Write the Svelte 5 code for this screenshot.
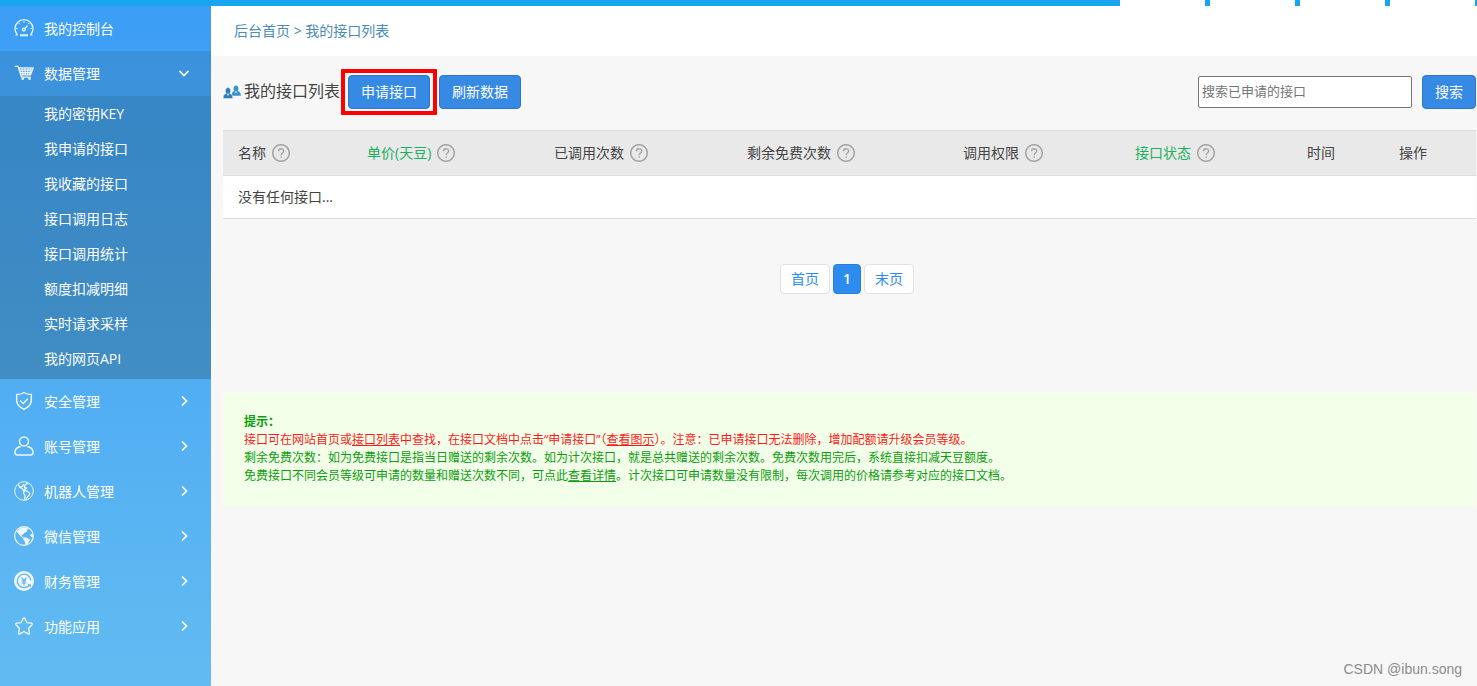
<script>
  let keyword = $state("");
  let dataOpen = $state(true);

  const tabs = ["one", "two", "three", "four"];

  const subMenu = [
    "我的密钥KEY",
    "我申请的接口",
    "我收藏的接口",
    "接口调用日志",
    "接口调用统计",
    "额度扣减明细",
    "实时请求采样",
    "我的网页API",
  ];

  const menu = [
    { icon: "shield", name: "安全管理" },
    { icon: "user", name: "账号管理" },
    { icon: "robot", name: "机器人管理" },
    { icon: "globe", name: "微信管理" },
    { icon: "money", name: "财务管理" },
    { icon: "star", name: "功能应用" },
  ];

  // width is in parts, turned into a percentage of the table
  const columns = [
    { name: "名称", width: 129, help: true },
    { name: "单价(天豆)", width: 187, help: true, sort: true },
    { name: "已调用次数", width: 193, help: true },
    { name: "剩余免费次数", width: 216, help: true },
    { name: "调用权限", width: 172, help: true },
    { name: "接口状态", width: 172, help: true, sort: true },
    { name: "时间", width: 92 },
    { name: "操作", width: 92 },
  ];
  const total = columns.reduce((sum, c) => sum + c.width, 0);
</script>

<svelte:head>
  <title>我的接口列表</title>
</svelte:head>

{#snippet icon(name)}
  <svg class="icon" viewBox="0 0 20 20" aria-hidden="true">
    {#if name === "dash"}
      <path d="M3.2 16.600A9 9 0 1 1 16.800 16.600" />
      <path d="M1.500 16.800h2.200M18.500 16.800h-2.200M10.600 10.800l3-3.200" />
      <path d="M10 3v1.800M4.800 5l1.200 1.300M15.200 5l-1 1.100M2 10.500h1.600M18 10.500h-1.600" stroke-width="1" />
      <circle cx="9.800" cy="11.600" r="1.400" />
      <path d="M6 17.300h8" stroke-width="2" />
    {:else if name === "cart"}
      <path d="M.8 3.400h3.400l3.300 10.800h9.300" />
      <path d="M4.600 4.800h14.600l-2.600 7H6.900z" />
      <path d="M8 5l1 7M11 5l.4 7M14 5l-.3 7M16.800 5l-1.200 7M5 7.200h13.400M5.800 9.600h11.800" />
      <circle class="solid" cx="8.800" cy="15.800" r="1.300" />
      <circle class="solid" cx="15.500" cy="15.800" r="1.300" />
    {:else if name === "shield"}
      <path d="M10 1.500c2 1.400 4.500 2 7.300 2v6c0 4-2.800 6.800-7.300 8.700-4.500-1.900-7.300-4.700-7.300-8.700v-6c2.800 0 5.300-.6 7.300-2z" stroke-width="1.500" />
      <path d="M6.200 9.500l3 3 4.600-4.800" stroke-width="1.500" />
    {:else if name === "user"}
      <circle cx="10" cy="5.400" r="4.500" stroke-width="1.500" />
      <path d="M6.800 10.400C3 11 1 13.400 1 16.500c0 1.800.9 2.500 2.500 2.500h13c1.600 0 2.500-.7 2.500-2.500 0-3.100-2-5.500-5.800-6.100" stroke-width="1.500" />
    {:else if name === "robot"}
      <circle cx="10" cy="10" r="9.300" stroke-width="1" />
      <path d="M4.200 3.400l1.700 3 2.600 1.300 1 2.300 1.300.8M6.300 5.600l2-.3 1.500-2.300M13.800 2l-3 2.300-.4 2.400 2.200.3-2.500 2 3.700 1.700 2.200 1.800-1.600 2.300-2.600 3.700-1.200-.6.500-3.600-1.500-2 .2-2.400" />
    {:else if name === "globe"}
      <circle cx="10" cy="10" r="9.300" stroke-width="1.200" />
      <path class="solid" d="M2.500 5.400L6 2.600l3-1.200 4 .4 1.500 1.500-2 .8.7 1.500-2.600 1.200-1.500 1.800-1.600.4.700 1.800 1.400.5-.4 1-3-2.300L4.800 8z" />
      <path class="solid" d="M9.500 11.400l3 .2 3.600 2.200-1.300 2-1.400 2.700-2 .8-.6-3.800-1.600-2zM16.500 8.200l2.300-.8.4 3-1.300.8-1.600-1.500z" />
    {:else if name === "money"}
      <circle class="solid" cx="10" cy="10" r="10" />
      <path class="cut" d="M15.700 13.500A6.700 6.700 0 1 1 16.700 9.500M14 13.800h2.300v2M7.500 6.700L10 9.500l2.500-2.800M10 9.500v4.800M7.700 10h4.600M7.700 12h4.600" />
    {:else if name === "star"}
      <path d="M10 1.800q.7 0 1 .8l1.700 4 4.800.6q1.500.5.6 1.600l-3.600 3.400 1 4.700q0 1.500-1.300 1L10 15.500l-4.200 2.400q-1.300.5-1.300-1l1-4.700-3.600-3.400q-.9-1.100.6-1.600l4.800-.6 1.700-4q.3-.8 1-.8z" />
    {/if}
  </svg>
{/snippet}

{#snippet arrow(down)}
  <svg class="arrow" class:down viewBox="0 0 12 12" aria-hidden="true">
    <path d="M4 1.500l4.500 4.500L4 10.500" />
  </svg>
{/snippet}

<div class="page">
  <header class="topbar">
    {#each tabs as tab (tab)}
      <span class="tab"></span>
    {/each}
  </header>

  <div class="body">
    <nav class="sidebar">
      <a class="item" href="#console">
        {@render icon("dash")}
        <span>我的控制台</span>
      </a>
      <button
        class="item open"
        aria-expanded={dataOpen}
        onclick={() => (dataOpen = !dataOpen)}
      >
        {@render icon("cart")}
        <span>数据管理</span>
        {@render arrow(dataOpen)}
      </button>
      {#if dataOpen}
        <ul class="sub">
          {#each subMenu as name (name)}
            <li><a href="#sub">{name}</a></li>
          {/each}
        </ul>
      {/if}
      {#each menu as m (m.icon)}
        <button class="item">
          {@render icon(m.icon)}
          <span>{m.name}</span>
          {@render arrow(false)}
        </button>
      {/each}
    </nav>

    <main>
      <div class="crumbs">
        <a href="#home">后台首页</a> &gt; <a href="#list">我的接口列表</a>
      </div>

      <div class="content">
        <div class="toolbar">
          <svg class="people" viewBox="0 0 18 14" aria-hidden="true">
            <path d="M9 10.800c-.6-2.600.6-4.200 2.300-4.700C9.800 3.800 10.600.400 13 .400s3.200 3.400 1.700 5.700c2 .5 3.300 2.100 3.200 4.700z" />
            <path class="front" d="M.300 13.600c-.4-3 .9-4.700 2.900-5.200C1.600 6 2.500 2.600 5 2.600S8.400 6 6.800 8.400c2 .5 3.300 2.200 2.900 5.200z" />
            <path class="collar" d="M3.900 8.800L5 11l1.100-2.200zM12 6.600l1 2 1-2z" />
          </svg>
          <h1>我的接口列表</h1>
          <div class="marked">
            <button class="btn">申请接口</button>
          </div>
          <button class="btn">刷新数据</button>
          <form class="search" onsubmit={(e) => e.preventDefault()}>
            <input
              type="text"
              aria-label="搜索已申请的接口"
              placeholder="搜索已申请的接口"
              bind:value={keyword}
            />
            <button class="btn" type="submit">搜索</button>
          </form>
        </div>

        <table>
          <thead>
            <tr>
              {#each columns as col (col.name)}
                <th style:width="{(col.width / total) * 100}%">
                  <div class="head" class:sort={col.sort}>
                    <span>{col.name}</span>
                    {#if col.help}
                      <svg class="help" viewBox="0 0 18 18" aria-hidden="true">
                        <circle cx="9" cy="9" r="8.300" />
                        <path d="M6.500 7.200c0-3.400 5.200-3.300 5.200-.2 0 2-2.500 2-2.500 4M9.200 12.300v1.400" />
                      </svg>
                    {/if}
                  </div>
                </th>
              {/each}
            </tr>
          </thead>
          <tbody>
            <tr>
              <td colspan={columns.length}>没有任何接口...</td>
            </tr>
          </tbody>
        </table>

        <div class="pager">
          <a href="#first">首页</a>
          <a class="current" href="#1">1</a>
          <a href="#last">末页</a>
        </div>

        <div class="tips">
          <strong>提示：</strong>
          <p class="warn">
            接口可在网站首页或<a href="#list">接口列表</a>中查找，在接口文档中点击“申请接口”（<a href="#demo">查看图示</a>）。注意：已申请接口无法删除，增加配额请升级会员等级。
          </p>
          <p>
            剩余免费次数：如为免费接口是指当日赠送的剩余次数。如为计次接口，就是总共赠送的剩余次数。免费次数用完后，系统直接扣减天豆额度。
          </p>
          <p>
            免费接口不同会员等级可申请的数量和赠送次数不同，可点此<a href="#detail">查看详情</a>。计次接口可申请数量没有限制，每次调用的价格请参考对应的接口文档。
          </p>
        </div>
      </div>
    </main>
  </div>

  <div class="watermark">CSDN @ibun.song</div>
</div>

<style>
  :global(body) {
    font-family: "Open Sans", "Noto Sans CJK SC", sans-serif;
    font-size: 14px;
    color: #444;
    background: #f7f7f7;
  }
  .page {
    position: relative;
    display: flex;
    flex-direction: column;
    min-height: 100vh;
  }
  a {
    color: inherit;
    text-decoration: none;
  }
  button,
  input {
    font-family: inherit;
  }
  button {
    cursor: pointer;
  }

  .topbar {
    display: flex;
    justify-content: flex-end;
    gap: 5px;
    height: 6px;
    padding-right: 2px;
    background: #18a5ef;
  }
  .tab {
    width: 85px;
    background: #fff;
  }
  .body {
    display: flex;
    flex: 1;
  }

  .sidebar {
    flex: none;
    width: 211px;
    color: #fff;
    background: linear-gradient(#3b9df5, #62bbf1);
  }
  .item {
    display: flex;
    align-items: center;
    gap: 10px;
    box-sizing: border-box;
    width: 100%;
    height: 45px;
    padding: 0 21px 2px 14px;
    border: none;
    background: none;
    color: #fff;
    font-size: 14px;
    text-align: left;
  }
  .item span {
    flex: 1;
  }
  .item.open {
    background: rgba(50, 90, 120, 0.2);
  }
  .icon {
    width: 20px;
    height: 20px;
    fill: none;
    stroke: #fff;
    stroke-width: 1.3;
    stroke-linejoin: round;
    opacity: 0.9;
  }
  .icon .solid {
    fill: #fff;
    stroke: none;
  }
  .icon .cut {
    stroke: #5ab5f2;
    stroke-width: 1.2;
  }
  .arrow {
    width: 12px;
    height: 12px;
    fill: none;
    stroke: #fff;
    stroke-width: 1.7;
  }
  .arrow.down {
    transform: rotate(90deg);
  }
  .sub {
    margin: 0;
    padding: 0 0 3px;
    list-style: none;
    background: rgba(40, 85, 115, 0.36);
  }
  .sub a {
    display: block;
    padding-left: 44px;
    line-height: 35px;
  }

  main {
    flex: 1;
    min-width: 0;
  }
  .crumbs {
    height: 50px;
    padding-left: 23px;
    line-height: 50px;
    color: #4a8bb8;
    background: #fff;
  }
  .content {
    padding: 0 1px 0 12px;
  }
  .toolbar {
    display: flex;
    align-items: center;
    box-sizing: border-box;
    height: 74px;
    padding-bottom: 2px;
  }
  .people {
    width: 18px;
    height: 14px;
    margin-right: 3px;
    fill: #3a94cc;
  }
  .people .front {
    fill: #2f7fb5;
    stroke: #f7f7f7;
    stroke-width: 0.5;
  }
  .people .collar {
    fill: #fff;
  }
  h1 {
    margin: 0;
    padding-bottom: 4px;
    font-size: 16px;
    font-weight: normal;
  }
  .btn {
    height: 34px;
    padding: 0 12px 2px;
    border: 1px solid #2a77cc;
    border-radius: 4px;
    background: #368ae3;
    color: #fff;
    font-size: 14px;
    white-space: nowrap;
  }
  .marked {
    display: flex;
    margin: 0 2px 0 1px;
    padding: 2px 3px;
    border: 4px solid #ff0000;
    border-radius: 1px;
  }
  .search {
    display: flex;
    align-items: center;
    gap: 10px;
    margin-left: auto;
  }
  .search input {
    box-sizing: border-box;
    width: 214px;
    height: 32px;
    padding: 0 3px 3px;
    border: 1px solid #767676;
    border-radius: 2px;
    font-size: 13px;
  }
  .search input::placeholder {
    color: #757575;
  }

  table {
    width: 100%;
    table-layout: fixed;
    border-collapse: collapse;
  }
  th,
  td {
    box-sizing: border-box;
    padding: 0 0 0 15px;
    font-weight: normal;
    text-align: left;
    border-bottom: 1px solid #ddd;
  }
  th {
    height: 45px;
    background: #e9e9e9;
    border-top: 1px solid #e0e0e0;
  }
  td {
    height: 43px;
    padding-bottom: 2px;
    background: #fff;
  }
  .head {
    display: flex;
    align-items: center;
    gap: 6px;
    white-space: nowrap;
  }
  .head span {
    padding-bottom: 2px;
  }
  .sort {
    color: #1cb160;
  }
  .help {
    width: 18px;
    height: 18px;
    fill: none;
    stroke: #a6a6a6;
    stroke-width: 1.5;
  }

  .pager {
    display: flex;
    justify-content: center;
    gap: 3px;
    padding: 45px 5px 0 0;
  }
  .pager a {
    box-sizing: border-box;
    height: 30px;
    padding: 0 10px;
    border: 1px solid #e2e2e2;
    border-radius: 4px;
    line-height: 27px;
    color: #2d8cf0;
    background: #fff;
  }
  .pager .current {
    padding: 0 9px;
    border-color: #2a7fd0;
    background: #2d8cf0;
    color: #fff;
    font-weight: 600;
  }

  .tips {
    margin-top: 98px;
    padding: 21px;
    font-size: 12px;
    line-height: 18px;
    color: #0f9d0f;
    background: #f2ffe9;
  }
  .tips strong {
    display: block;
  }
  .tips p {
    margin: 0;
  }
  .tips a {
    text-decoration: underline;
  }
  .tips .warn {
    color: #ff1a1a;
  }

  .watermark {
    position: absolute;
    right: 15px;
    bottom: 9px;
    font-family: "Liberation Sans", sans-serif;
    font-size: 14px;
    color: #8c8c8c;
  }
</style>
